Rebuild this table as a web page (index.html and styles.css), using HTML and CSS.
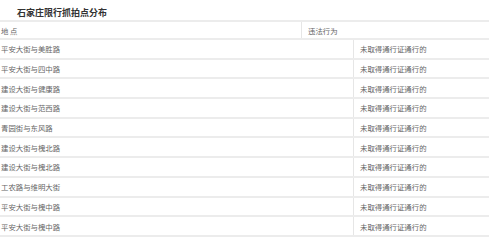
FILE: index.html
```html
<!DOCTYPE html>
<html>
<head>
<meta charset="utf-8">
<link rel="stylesheet" href="styles.css">
</head>
<body>
<div class="page">
  <h3 class="title">石家庄限行抓拍点分布</h3>
  <div class="head">
    <div class="cell c1">地 点</div>
    <div class="cell c2">违法行为</div>
  </div>
  <div class="rows">
    <div class="row"><div class="cell d1">平安大街与美胜路</div><div class="cell d2">未取得通行证通行的</div></div>
    <div class="row"><div class="cell d1">平安大街与四中路</div><div class="cell d2">未取得通行证通行的</div></div>
    <div class="row"><div class="cell d1">建设大街与健康路</div><div class="cell d2">未取得通行证通行的</div></div>
    <div class="row"><div class="cell d1">建设大街与范西路</div><div class="cell d2">未取得通行证通行的</div></div>
    <div class="row"><div class="cell d1">青园街与东风路</div><div class="cell d2">未取得通行证通行的</div></div>
    <div class="row"><div class="cell d1">建设大街与槐北路</div><div class="cell d2">未取得通行证通行的</div></div>
    <div class="row"><div class="cell d1">建设大街与槐北路</div><div class="cell d2">未取得通行证通行的</div></div>
    <div class="row"><div class="cell d1">工农路与维明大街</div><div class="cell d2">未取得通行证通行的</div></div>
    <div class="row"><div class="cell d1">平安大街与槐中路</div><div class="cell d2">未取得通行证通行的</div></div>
    <div class="row"><div class="cell d1">平安大街与槐中路</div><div class="cell d2">未取得通行证通行的</div></div>
  </div>
</div>
</body>
</html>
```
FILE: styles.css
```css
html, body {
  margin: 0;
  padding: 0;
  background: #fff;
}
.page {
  width: 489px;
  font-family: "Noto Sans CJK SC", "Noto Sans", sans-serif;
  color: #666;
}
.title {
  margin: 0;
  height: 20px;
  box-sizing: border-box;
  padding: 6px 0 0 17px;
  font-size: 9px;
  line-height: 13px;
  font-weight: bold;
  color: #333;
}
.head {
  display: grid;
  grid-template-columns: 302px 1fr;
  height: 20px;
  box-sizing: border-box;
  border-top: 2px solid #ececec;
  border-bottom: 2px solid #ececec;
}
.row {
  display: grid;
  grid-template-columns: 354px 1fr;
  height: 19.7px;
  box-sizing: border-box;
  border-bottom: 2px solid #ececec;
}
.cell {
  display: flex;
  align-items: center;
  font-size: 7.4px;
  white-space: nowrap;
}
.c1, .d1 {
  padding-left: 1px;
  border-right: 1px solid #e6e6e6;
}
.c2 {
  padding-left: 6px;
}
.d2 {
  padding-left: 6px;
}
```
